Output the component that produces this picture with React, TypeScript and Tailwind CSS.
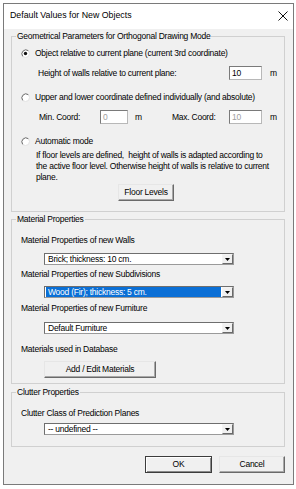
import React from "react";

function Radio({ checked }: { checked?: boolean }) {
  return (
    <svg width="9" height="9" viewBox="0 0 9 9" className="shrink-0">
      <circle cx="4.5" cy="4.5" r="4" fill="#fff" stroke="#e2e2e2" strokeWidth="1" />
      <path d="M1.7 7.3 A4 4 0 0 1 7.3 1.7" stroke="#6e6e6e" fill="none" strokeWidth="1" />
      {checked && <circle cx="4.5" cy="4.5" r="1.7" fill="#111" />}
    </svg>
  );
}

function Input({ value, disabled, w }: { value: string; disabled?: boolean; w: string }) {
  return (
    <div
      className={`${w} flex h-[14px] items-center border border-t-[#7a7a7a] border-l-[#7a7a7a] border-r-[#b8b8b8] border-b-[#b8b8b8] bg-white pl-[2px] ${
        disabled ? "text-[#a0a0a0]" : "text-black"
      }`}
    >
      {value}
    </div>
  );
}

function Arrow() {
  return (
    <div className="flex w-[11px] items-center justify-center border border-t-[#f4f4f4] border-l-[#f4f4f4] border-r-[#6a6a6a] border-b-[#6a6a6a] bg-[#f0f0f0]">
      <svg width="5" height="3" viewBox="0 0 5 3">
        <path d="M0 0 H5 L2.5 3 Z" fill="#000" />
      </svg>
    </div>
  );
}

function Select({ text, selected }: { text: string; selected?: boolean }) {
  return (
    <div className="ml-[23px] flex h-[12px] w-[190px] items-stretch border border-t-[#6e6e6e] border-l-[#6e6e6e] border-r-[#9a9a9a] border-b-[#9a9a9a] bg-white">
      <div className="flex flex-1 items-stretch pl-[1px] pr-[1px]">
        <div
          className={`flex flex-1 items-center pl-[2px] leading-[10px] ${
            selected ? "bg-[#0a6fd6] text-white" : "text-black"
          }`}
        >
          {text}
        </div>
      </div>
      <Arrow />
    </div>
  );
}

function Button({ label, w, def }: { label: string; w: string; def?: boolean }) {
  return (
    <div
      className={`${w} flex h-[17px] items-center justify-center border ${
        def
          ? "border-[#3c3c3c] shadow-[inset_1px_1px_0_#ffffff,inset_-1px_-1px_0_#8a8a8a]"
          : "border-t-[#e6e6e6] border-l-[#e6e6e6] border-r-[#6a6a6a] border-b-[#6a6a6a] shadow-[inset_-1px_-1px_0_#a8a8a8]"
      } bg-[#f0f0f0] text-black`}
    >
      {label}
    </div>
  );
}

export default function App() {
  return (
    <div className="h-[489px] w-[296px] bg-white pl-[3px] pt-[3px] font-[Liberation_Sans,Arial,sans-serif] text-[8.5px] leading-[11px] tracking-[-0.25px] text-black">
      <div className="flex h-[482px] w-[291px] flex-col border border-[#7a7a7a] bg-[#f0f0f0]">
        {/* title bar */}
        <div className="flex h-[25px] items-start justify-between bg-white pl-[6px] pr-[5px] pt-[6px]">
          <span className="text-[8.8px] tracking-[0px]">Default Values for New Objects</span>
          <svg width="10" height="10" viewBox="0 0 10 10" className="mt-[1px]">
            <path d="M0.5 0.5 L9.5 9.5 M9.5 0.5 L0.5 9.5" stroke="#111" strokeWidth="1" />
          </svg>
        </div>

        {/* body */}
        <div className="flex flex-1 flex-col px-[7px] pt-[2px]">
          {/* Group 1 */}
          <fieldset className="w-[274px] border border-[#d0d0d0]">
            <legend className="ml-[4px] px-[1px]">Geometrical Parameters for Orthogonal Drawing Mode</legend>
            <div className="flex flex-col pb-[10px] pl-[9px]">
              <div className="mt-[6px] flex h-[11px] items-center gap-[5px]">
                <Radio checked />
                <span>Object relative to current plane (current 3rd coordinate)</span>
              </div>
              <div className="mt-[7px] flex h-[14px] items-center pl-[17px]">
                <span className="w-[191px]">Height of walls relative to current plane:</span>
                <Input value="10" w="w-[33px]" />
                <span className="ml-[8px]">m</span>
              </div>
              <div className="mt-[12px] flex h-[11px] items-center gap-[5px]">
                <Radio />
                <span>Upper and lower coordinate defined individually (and absolute)</span>
              </div>
              <div className="mt-[7px] flex h-[14px] items-center pl-[18px]">
                <span className="w-[61px]">Min. Coord:</span>
                <Input value="0" disabled w="w-[28px]" />
                <span className="ml-[7px] w-[37px]">m</span>
                <span className="w-[57px]">Max. Coord:</span>
                <Input value="10" disabled w="w-[33px]" />
                <span className="ml-[8px]">m</span>
              </div>
              <div className="mt-[12px] flex h-[11px] items-center gap-[5px]">
                <Radio />
                <span>Automatic mode</span>
              </div>
              <div className="mt-[3px] flex flex-col whitespace-nowrap pl-[15px]">
                <span>If floor levels are defined,&nbsp; height of walls is adapted according to</span>
                <span>the active floor level. Otherwise height of walls is relative to current</span>
                <span>plane.</span>
              </div>
              <div className="ml-[97px] mt-[1px]">
                <Button label="Floor Levels" w="w-[56px]" />
              </div>
            </div>
          </fieldset>

          {/* Group 2 */}
          <fieldset className="mt-[2px] w-[274px] border border-[#d0d0d0]">
            <legend className="ml-[4px] px-[1px]">Material Properties</legend>
            <div className="flex flex-col pb-[5px] pl-[9px]">
              <span className="mt-[10px]">Material Properties of new Walls</span>
              <div className="mt-[7px]">
                <Select text="Brick; thickness: 10 cm." />
              </div>
              <span className="mt-[4px]">Material Properties of new Subdivisions</span>
              <div className="mt-[6px]">
                <Select text="Wood (Fir); thickness: 5 cm." selected />
              </div>
              <span className="mt-[5px]">Material Properties of new Furniture</span>
              <div className="mt-[8px]">
                <Select text="Default Furniture" />
              </div>
              <span className="mt-[10px]">Materials used in Database</span>
              <div className="ml-[23px] mt-[6px]">
                <Button label="Add / Edit Materials" w="w-[112px]" />
              </div>
            </div>
          </fieldset>

          {/* Group 3 */}
          <fieldset className="mt-[3px] w-[274px] border border-[#d0d0d0]">
            <legend className="ml-[4px] px-[1px]">Clutter Properties</legend>
            <div className="flex flex-col pb-[11px] pl-[9px]">
              <span className="mt-[10px]">Clutter Class of Prediction Planes</span>
              <div className="mt-[4px]">
                <Select text="-- undefined --" />
              </div>
            </div>
          </fieldset>

          {/* Buttons */}
          <div className="mt-[9px] flex w-[274px] justify-end gap-[7px]">
            <Button label="OK" w="w-[67px]" def />
            <Button label="Cancel" w="w-[66px]" />
          </div>
        </div>
      </div>
    </div>
  );
}
